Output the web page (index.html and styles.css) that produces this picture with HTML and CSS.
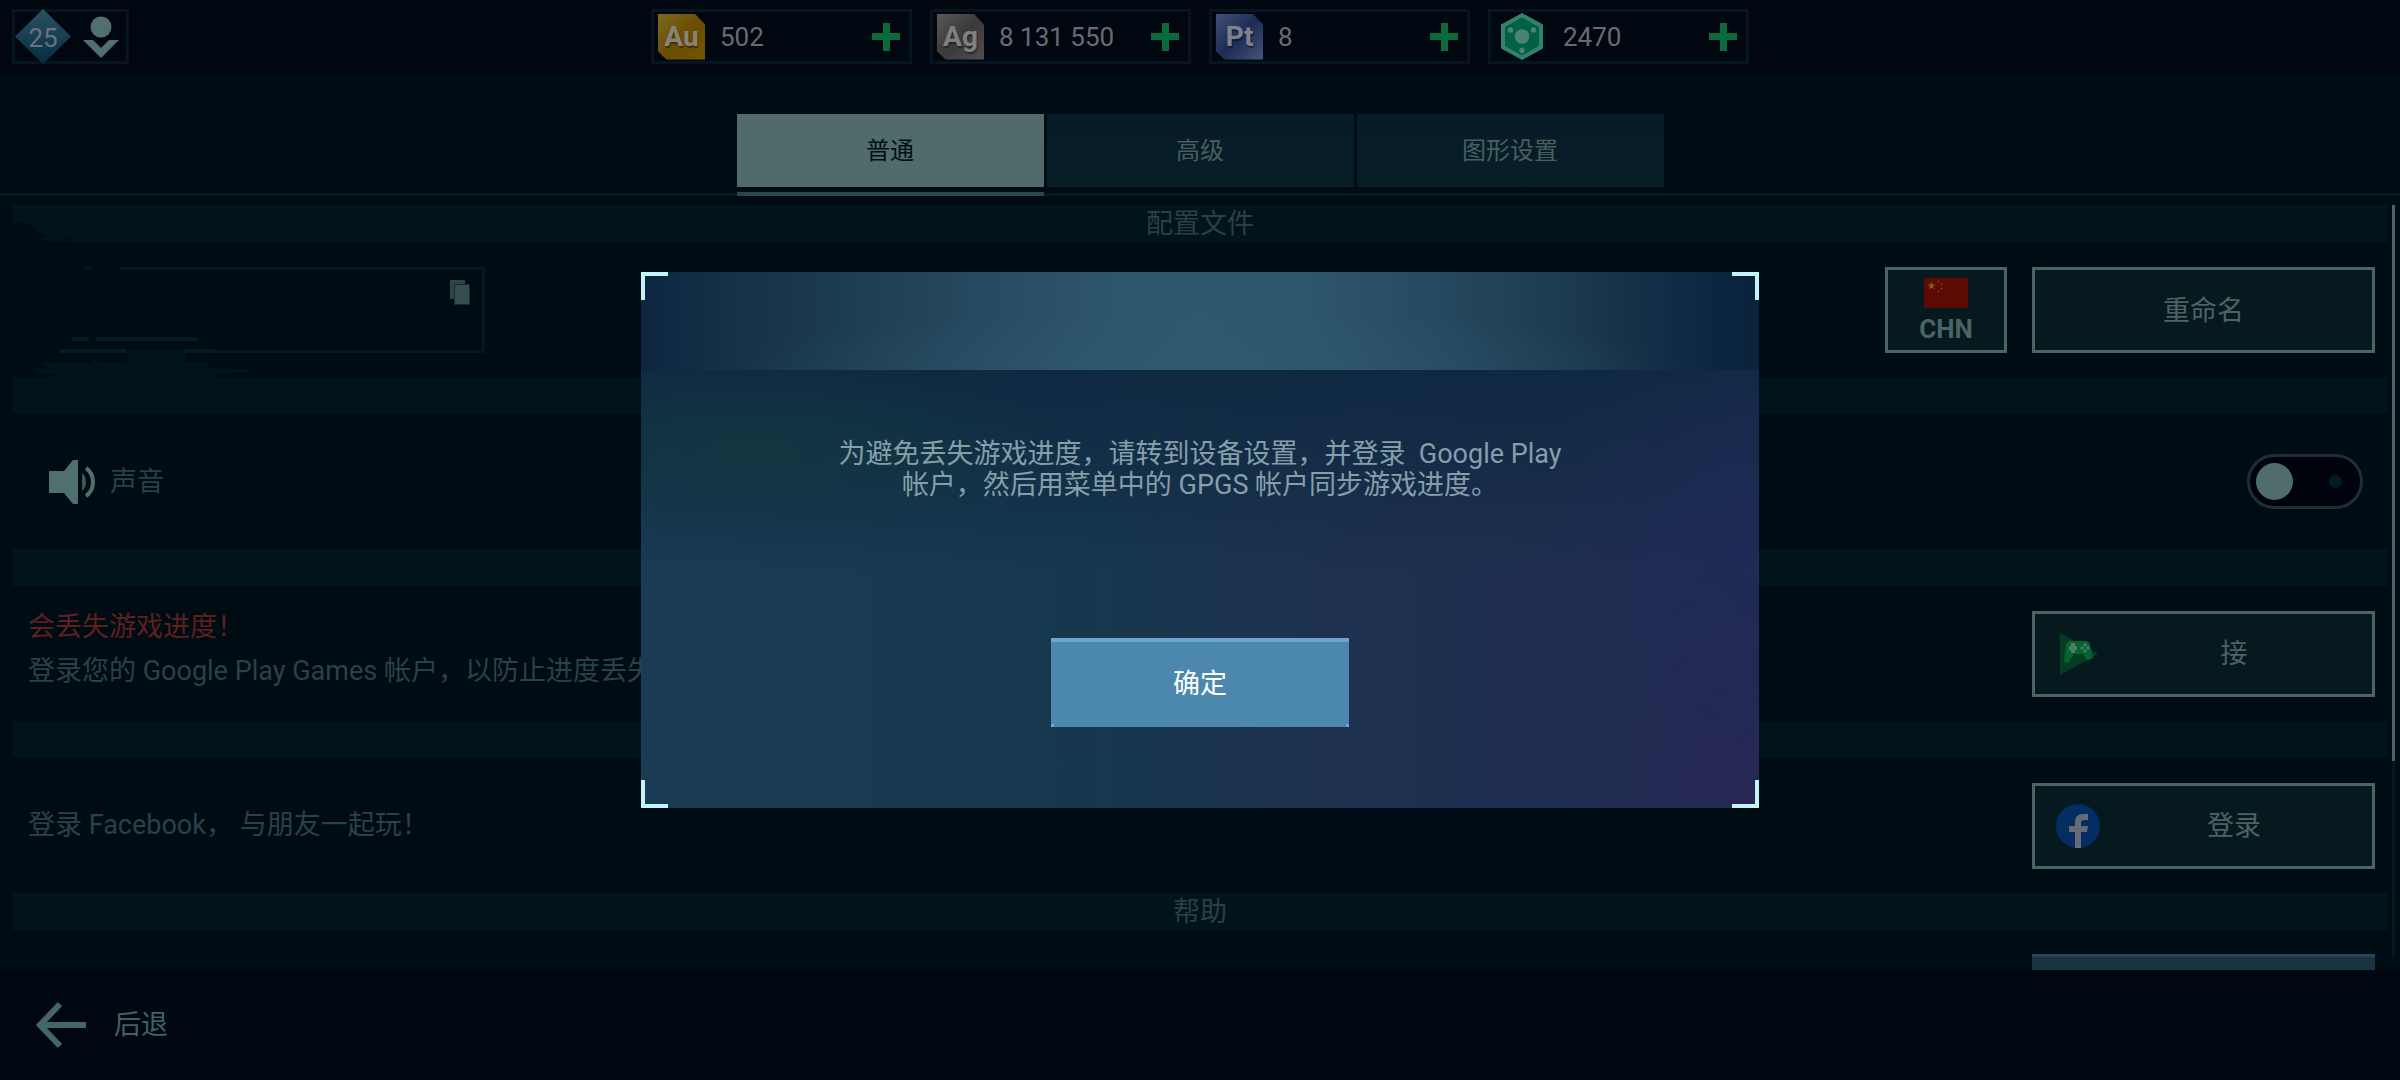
FILE: index.html
```html
<!DOCTYPE html>
<html lang="zh-CN">
<head>
<meta charset="utf-8">
<title>设置</title>
<link rel="stylesheet" href="styles.css">
</head>
<body>
<header class="topbar">
  <div class="rank">
    <span class="rank-level">25</span>
    <svg class="rank-person" width="36" height="42" viewBox="0 0 36 42" aria-hidden="true"><circle cx="18" cy="11" r="10.5"/><path d="M0 24h10l8 8 8-8h10L18 42z"/></svg>
  </div>
  <div class="wallet">
    <div class="coin"><span class="metal gold">Au</span><span class="amount">502</span><button class="plus" aria-label="购买金"></button></div>
    <div class="coin"><span class="metal silver">Ag</span><span class="amount">8 131 550</span><button class="plus" aria-label="购买银"></button></div>
    <div class="coin"><span class="metal platinum">Pt</span><span class="amount">8</span><button class="plus" aria-label="购买铂"></button></div>
    <div class="coin coin-token">
      <svg class="token" width="42" height="47" viewBox="0 0 42 47" aria-hidden="true">
        <path d="M21 0 42 11.500V35.500L21 47 0 35.500V11.500z" fill="#34806c"/>
        <path d="M21 4.500 38 14V33L21 42.500 4 33V14z" fill="#016046"/>
        <circle cx="21" cy="23.500" r="7.300" fill="#4b8273"/>
        <g fill="#4b8273"><circle cx="9.500" cy="17" r="2.700"/><circle cx="32.500" cy="17" r="2.700"/><circle cx="21" cy="37.500" r="2.700"/></g>
      </svg>
      <span class="amount">2470</span><button class="plus" aria-label="购买代币"></button></div>
  </div>
</header>

<nav class="tabs" aria-label="设置类别">
  <button class="tab tab-active">普通</button>
  <button class="tab">高级</button>
  <button class="tab">图形设置</button>
</nav>

<main class="settings">
  <div class="list">
    <section class="section">
      <h2 class="band">配置文件</h2>
      <div class="row row-profile">
        <div class="profile">
          <button class="copy" aria-label="复制">
            <svg width="20" height="26" viewBox="0 0 20 26"><path d="M0 1h15v19H0z" fill="#2d4547"/><path d="M4 5h16v21H4z" fill="#172b2e"/><path d="M5 6h14v19H5z" fill="#364c4d"/></svg>
          </button>
        </div>
        <svg class="smear" width="260" height="176" viewBox="0 0 260 176" aria-hidden="true">
          <path d="M12 21C18 14 34 18 38 27Q48 30 47 33H68V62H120V67H92V62H84L88 67H60V62H12z" fill="#000c13"/>
          <path d="M37 33h26l4 3H44z" fill="#02141b"/>
          <path d="M12 60H120V143H216V150H12z" fill="#000c13"/>
          <path d="M84 62h8l-2 3h-4z" fill="#061820"/>
          <path d="M72 132h17v4H72zM96 132h102v4H96zM60 144h66v4H60zM181 144h35v4h-35z" fill="#071b26"/>
          <path d="M127 145H184L186 157 210 158 205 163 250 164 247 168H216V173H54V169L38 168 31 163H48L43 158H90L95 154 100 158H127z" fill="#02141b"/>
        </svg>
        <button class="box box-country">
          <svg width="44" height="30" viewBox="0 0 44 30" aria-hidden="true"><path d="M0 0h44v30H0z" fill="#5c0b04"/><path d="m7.500 3.500 1 3h3l-2.500 2 1 3-2.500-2-2.500 2 1-3-2.500-2h3z" fill="#80601a"/><g fill="#74421a"><circle cx="14.500" cy="3.500" r="1"/><circle cx="17.500" cy="6" r="1"/><circle cx="17.500" cy="10.500" r="1"/><circle cx="14.500" cy="13.500" r="1"/></g></svg>
          <span>CHN</span>
        </button>
        <button class="box box-wide">重命名</button>
      </div>
    </section>

    <section class="section">
      <div class="band"></div>
      <div class="row">
        <label class="sound" for="sound">
          <svg width="46" height="44" viewBox="0 0 46 44" aria-hidden="true"><path d="M0 11h15L24 0h5v44h-5L15 33H0z" fill="#50706f"/><path d="M33 13q4 3 4 9t-4 9z" fill="#3d5657"/><path d="M37 8Q44 13 44 22t-7 14" fill="none" stroke="#50706f" stroke-width="4"/></svg>
          <span>声音</span>
        </label>
        <input class="toggle" type="checkbox" id="sound">
      </div>
    </section>

    <section class="section">
      <div class="band"></div>
      <div class="row">
        <div class="text">
          <p class="warning">会丢失游戏进度！</p>
          <p>登录您的 Google Play Games 帐户，以防止进度丢失。</p>
        </div>
        <button class="box box-wide box-icon">
          <svg width="44" height="44" viewBox="0 0 44 44" aria-hidden="true"><path d="M4 1 42 22 4 43z" fill="#043d20"/><path d="M14 9h15q4 0 5 4l3 12q0 2-6 3l-4-6H18l-6 9q-4 0-4-3l2-15q1-4 4-4z" fill="#036431"/><path d="M15 11h4v3h2v4h-2v3h-4v-3h-2v-4h2z" fill="#4e7a67"/><path d="m29 11 2 2-2 2-2-2zm0 6 2 2-2 2-2-2zm-3-3 2 2-2 2-2-2zm6 0 2 2-2 2-2-2z" fill="#4e7a67"/></svg>
          <span>接</span>
        </button>
      </div>
    </section>

    <section class="section">
      <div class="band"></div>
      <div class="row">
        <div class="text"><p>登录 Facebook， 与朋友一起玩！</p></div>
        <button class="box box-wide box-icon">
          <svg width="44" height="44" viewBox="0 0 44 44" aria-hidden="true"><circle cx="22" cy="22" r="22" fill="#042e63"/><path d="M19 44V28h-6v-6h6v-4q0-8 8-8h5v6h-3q-4 0-4 3v3h7l-1 6h-6v16z" fill="#656a73"/></svg>
          <span>登录</span>
        </button>
      </div>
    </section>

    <section class="section">
      <h2 class="band">帮助</h2>
      <div class="row"><button class="box-help" aria-label="帮助"></button></div>
    </section>
  </div>
  <div class="track" aria-hidden="true"><div class="thumb"></div></div>
</main>

<footer class="footer">
  <button class="back">
    <svg width="50" height="48" viewBox="0 0 50 48" aria-hidden="true"><path d="M24 3 4 24l20 21M4 24h46" fill="none" stroke="#416769" stroke-width="6"/></svg>
    <span>后退</span>
  </button>
</footer>

<div class="overlay">
  <div class="dialog" role="dialog" aria-modal="true" aria-describedby="message">
    <div class="dialog-head"></div>
    <p class="message" id="message">为避免丢失游戏进度，请转到设备设置，并登录&nbsp; Google Play<br>帐户，然后用菜单中的 GPGS 帐户同步游戏进度。</p>
    <button class="confirm">确定</button>
    <i class="corner corner-tl"></i><i class="corner corner-tr"></i><i class="corner corner-bl"></i><i class="corner corner-br"></i>
  </div>
</div>
</body>
</html>
```
FILE: styles.css
```css
* { box-sizing: border-box; }

body {
  margin: 0;
  height: 100vh;
  display: flex;
  flex-direction: column;
  overflow: hidden;
  background: #000c13;
  color: #2a404b;
  font: 27px/32px Roboto, "Noto Sans CJK SC", sans-serif;
}

button {
  margin: 0;
  padding: 0;
  border: 0;
  border-radius: 0;
  background: none;
  color: inherit;
  font: inherit;
  cursor: pointer;
}

h2, p { margin: 0; font-size: 27px; font-weight: 400; }
svg { display: block; flex: none; }

/* top bar */
.topbar {
  flex: none;
  display: grid;
  grid-template-columns: 1fr auto 1fr;
  height: 74px;
  padding: 9px 12px;
  background: #000710;
}

.rank {
  display: flex;
  align-items: center;
  justify-content: space-between;
  width: 117px;
  height: 55px;
  padding-right: 7px;
  border: 3px solid #06161f;
}

.rank-level {
  width: 56px;
  height: 55px;
  clip-path: polygon(50% 0, 100% 50%, 50% 100%, 0 50%);
  background: linear-gradient(#2c5362, #052c40);
  color: #69747c;
  font-size: 26px;
  line-height: 59px;
  text-align: center;
}

.rank-person { fill: #50706f; }

.wallet { display: flex; gap: 18px; }

.coin {
  display: flex;
  align-items: center;
  width: 261px;
  height: 55px;
  padding: 0 9px 0 4px;
  border: 3px solid #06161f;
  color: #6a6b70;
  font-size: 26px;
}

.coin-token { padding-left: 10px; }

.metal {
  width: 47px;
  height: 46px;
  margin-right: 15px;
  clip-path: polygon(0 0, 78% 0, 100% 24%, 100% 100%, 18% 100%, 0 82%);
  color: #89847a;
  font-size: 28px;
  font-weight: 700;
  line-height: 46px;
  text-align: center;
  text-shadow: 1px 2px 1px rgba(0, 0, 0, .4);
}

.gold { background: linear-gradient(135deg, #7c6a22, #6b4d03 50%, #755502); }
.silver { background: linear-gradient(135deg, #5c5858, #3b3939 50%, #504e4e); color: #808082; }
.platinum { background: linear-gradient(135deg, #455276, #1d2b56 50%, #47557a); color: #7c8290; }
.token { margin-right: 20px; }
.amount { flex: 1; }

.plus {
  width: 28px;
  height: 28px;
  background:
    linear-gradient(#096b3c, #096b3c) center / 28px 7px no-repeat,
    linear-gradient(#096b3c, #096b3c) center / 7px 28px no-repeat;
}

/* tabs */
.tabs {
  flex: none;
  display: flex;
  justify-content: center;
  gap: 3px;
  height: 122px;
  padding-top: 40px;
  border-bottom: 3px solid #071b26;
}

.tab {
  position: relative;
  width: 307px;
  height: 73px;
  background: linear-gradient(#061b29, #071e27);
  color: #45605f;
  font-size: 24px;
}

.tab-active { background: #506b6a; color: #000f16; }

.tab-active::after {
  content: "";
  position: absolute;
  inset: 78px 0 auto;
  height: 4px;
  background: #2d4649;
}

/* settings list */
.settings {
  flex: 1;
  min-height: 0;
  display: flex;
  gap: 4px;
  padding: 9px 5px 0 12px;
  overflow: hidden;
}

.list { flex: 1; }

.band {
  height: 37px;
  background: #02141b;
  color: #2a3f46;
  line-height: 38px;
  text-align: center;
}

.row {
  position: relative;
  display: flex;
  align-items: center;
  justify-content: space-between;
  height: 135px;
  padding: 0 13px 0 16px;
}

.row-profile { gap: 25px; padding-left: 44px; }

.profile {
  display: flex;
  align-items: flex-start;
  justify-content: flex-end;
  width: 429px;
  height: 86px;
  margin-right: auto;
  padding: 9px 12px;
  border: 3px solid #051720;
}

.smear {
  position: absolute;
  top: -37px;
  left: -12px;
}

.box {
  height: 86px;
  border: 3px solid #4c6564;
  background: #06191f;
  color: #4a6364;
}

.box-country {
  display: flex;
  flex-direction: column;
  align-items: center;
  gap: 5px;
  width: 122px;
  padding-top: 8px;
  font-size: 26px;
  font-weight: 700;
}

.box-wide { width: 343px; padding-top: 2px; }

.box-icon {
  display: flex;
  align-items: center;
  padding: 0 0 0 21px;
}

.box-icon span { flex: 1; padding-right: 4px; }

.sound {
  display: flex;
  align-items: center;
  gap: 15px;
  padding-left: 21px;
}

.toggle {
  appearance: none;
  display: flex;
  align-items: center;
  justify-content: space-between;
  width: 116px;
  height: 55px;
  margin: 0 12px 0 0;
  padding: 0 18px 0 6px;
  border: 3px solid #1a3036;
  border-radius: 28px;
  background: #00030b;
}

.toggle::before {
  content: "";
  width: 37px;
  height: 37px;
  border-radius: 50%;
  background: #506c6b;
}

.toggle::after {
  content: "";
  width: 13px;
  height: 13px;
  border-radius: 50%;
  background: #011c26;
}

.text {
  display: flex;
  flex-direction: column;
  gap: 12px;
  padding-bottom: 10px;
}

.text p:only-child { padding-top: 8px; }
.warning { color: #5e1f1e; }

.box-help {
  align-self: flex-start;
  width: 343px;
  height: 86px;
  margin: 24px 0 0 auto;
  border-top: 3px solid #274456;
  background: #193343;
}

.track {
  width: 3px;
  margin-bottom: 13px;
  background: #051820;
}

.thumb { height: 74%; background: #4c6564; }

/* footer */
.footer {
  flex: none;
  height: 110px;
  padding: 0 36px;
  background: #000710;
}

.back {
  display: flex;
  align-items: center;
  gap: 28px;
  height: 110px;
  color: #416264;
}

/* dialog */
.overlay {
  position: fixed;
  inset: 0;
  display: grid;
  place-items: center;
}

.dialog {
  position: relative;
  display: flex;
  flex-direction: column;
  align-items: center;
  width: 1118px;
  height: 536px;
  background:
    radial-gradient(ellipse 300px 90px at 10% 33%, rgba(18, 56, 64, .8), transparent),
    radial-gradient(ellipse 200px 260px at 100% 100%, rgba(40, 38, 86, .9), transparent),
    radial-gradient(ellipse 220px 240px at 100% 50%, rgba(30, 42, 88, .8), transparent),
    linear-gradient(rgba(14, 40, 64, .95) 18%, rgba(14, 40, 64, .5) 38%, transparent 56%),
    linear-gradient(90deg, #1a3b54, #16384f 40%, #1c344f 52%, #1f2f50 70%, #202c50);
}

.dialog-head {
  align-self: stretch;
  height: 98px;
  background:
    radial-gradient(ellipse 480px 60px at 50% 100%, rgba(48, 90, 112, .5), transparent),
    linear-gradient(90deg, #0c2640, #152f47 7%, #1d3c50 18%, #264a60 30%, #2d556c 42%, #30586d 50%, #2d556c 60%, #264a60 71%, #1c3a4f 83%, #102a43 93%, #0a223b);
}

.message {
  margin-top: 69px;
  color: #849fa9;
  line-height: 31px;
  text-align: center;
}

.confirm {
  width: 298px;
  height: 89px;
  margin-top: 137px;
  padding-bottom: 2px;
  border-top: 4px solid #6da7cf;
  background:
    linear-gradient(#6da7cf, #6da7cf) left bottom / 3px 3px no-repeat,
    linear-gradient(#6da7cf, #6da7cf) right bottom / 3px 3px no-repeat,
    #4c88ad;
  color: #fff;
}

.corner {
  position: absolute;
  width: 27px;
  height: 28px;
  border: 0 solid #c2f5f6;
}

.corner-tl { top: 0; left: 0; border-width: 4px 0 0 4px; }
.corner-tr { top: 0; right: 0; border-width: 4px 4px 0 0; }
.corner-bl { bottom: 0; left: 0; border-width: 0 0 4px 4px; }
.corner-br { bottom: 0; right: 0; border-width: 0 4px 4px 0; }
```
